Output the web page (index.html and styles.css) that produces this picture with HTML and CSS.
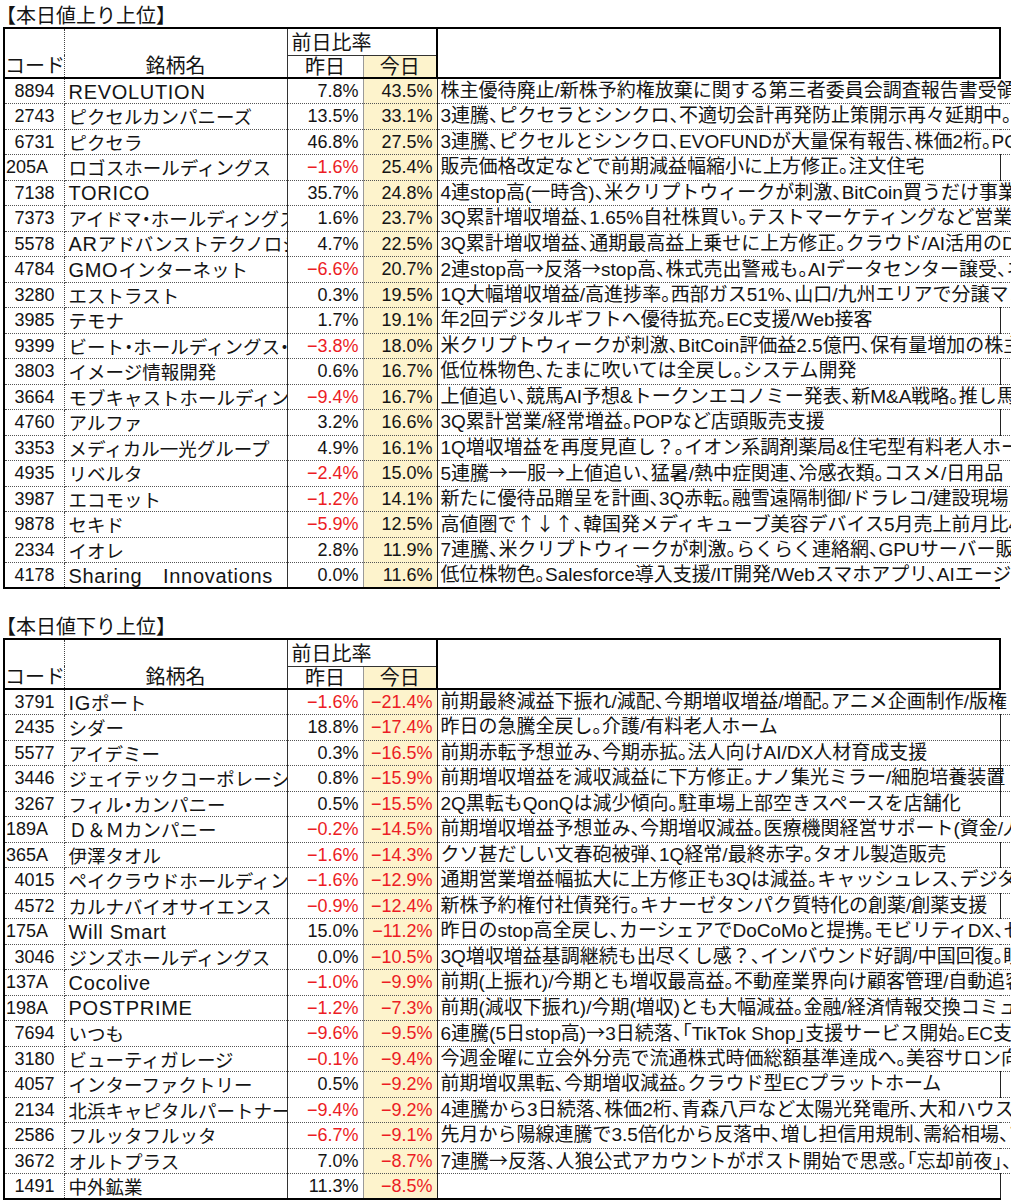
FILE: index.html
```html
<!DOCTYPE html>
<html lang="ja">
<head>
<meta charset="utf-8">
<title>本日値上り上位 / 本日値下り上位</title>
<link rel="stylesheet" href="styles.css">
</head>
<body>
<section class="block">
  <h2 class="title">【本日値上り上位】</h2>
  <table class="rank">
    <colgroup><col class="c-code"><col class="c-name"><col class="c-prev"><col class="c-today"><col class="c-note"><col class="c-extra"></colgroup>
    <thead>
      <tr class="h1"><th rowspan="2" class="h-code">コード</th><th rowspan="2" class="h-name">銘柄名</th><th colspan="2" class="h-ratio">前日比率</th><th rowspan="2" class="h-note"></th><th rowspan="2" class="h-extra"></th></tr>
      <tr class="h2"><th class="h-prev">昨日</th><th class="h-today">今日</th></tr>
    </thead>
    <tbody>
      <tr><td class="code num">8894</td><td class="name"><span class="lat">REVOLUTION</span></td><td class="prev">7.8%</td><td class="today">43.5%</td><td class="note">株主優待廃止/新株予約権放棄に関する第三者委員会調査報告書受領</td><td class="extra"></td></tr>
      <tr><td class="code num">2743</td><td class="name">ピクセルカンパニーズ</td><td class="prev">13.5%</td><td class="today">33.1%</td><td class="note">3連騰、ピクセラとシンクロ、不適切会計再発防止策開示再々延期中。福祉</td><td class="extra"></td></tr>
      <tr><td class="code num">6731</td><td class="name">ピクセラ</td><td class="prev">46.8%</td><td class="today">27.5%</td><td class="note">3連騰、ピクセルとシンクロ、EVOFUNDが大量保有報告、株価2桁。PC用</td><td class="extra"></td></tr>
      <tr><td class="code">205A</td><td class="name">ロゴスホールディングス</td><td class="prev neg">−1.6%</td><td class="today">25.4%</td><td class="note short">販売価格改定などで前期減益幅縮小に上方修正。注文住宅</td><td class="extra"></td></tr>
      <tr><td class="code num">7138</td><td class="name"><span class="lat">TORICO</span></td><td class="prev">35.7%</td><td class="today">24.8%</td><td class="note">4連stop高(一時含)、米クリプトウィークが刺激、BitCoin買うだけ事業に参入</td><td class="extra"></td></tr>
      <tr><td class="code num">7373</td><td class="name">アイドマ・ホールディングス</td><td class="prev">1.6%</td><td class="today">23.7%</td><td class="note">3Q累計増収増益、1.65%自社株買い。テストマーケティングなど営業支援</td><td class="extra"></td></tr>
      <tr><td class="code num">5578</td><td class="name"><span class="lat">AR</span>アドバンストテクノロジ</td><td class="prev">4.7%</td><td class="today">22.5%</td><td class="note">3Q累計増収増益、通期最高益上乗せに上方修正。クラウド/AI活用のDX</td><td class="extra"></td></tr>
      <tr><td class="code num">4784</td><td class="name"><span class="lat">GMO</span>インターネット</td><td class="prev neg">−6.6%</td><td class="today">20.7%</td><td class="note">2連stop高<span class="sym">→</span>反落<span class="sym">→</span>stop高、株式売出警戒も。AIデータセンター譲受、ネット</td><td class="extra"></td></tr>
      <tr><td class="code num">3280</td><td class="name">エストラスト</td><td class="prev">0.3%</td><td class="today">19.5%</td><td class="note">1Q大幅増収増益/高進捗率。西部ガス51%、山口/九州エリアで分譲マンション</td><td class="extra"></td></tr>
      <tr><td class="code num">3985</td><td class="name">テモナ</td><td class="prev">1.7%</td><td class="today">19.1%</td><td class="note short">年2回デジタルギフトへ優待拡充。EC支援/Web接客</td><td class="extra"></td></tr>
      <tr><td class="code num">9399</td><td class="name">ビート・ホールディングス・リミテッド</td><td class="prev neg">−3.8%</td><td class="today">18.0%</td><td class="note">米クリプトウィークが刺激、BitCoin評価益2.5億円、保有量増加の株主提案</td><td class="extra"></td></tr>
      <tr><td class="code num">3803</td><td class="name">イメージ情報開発</td><td class="prev">0.6%</td><td class="today">16.7%</td><td class="note short">低位株物色、たまに吹いては全戻し。システム開発</td><td class="extra"></td></tr>
      <tr><td class="code num">3664</td><td class="name">モブキャストホールディングス</td><td class="prev neg">−9.4%</td><td class="today">16.7%</td><td class="note">上値追い、競馬AI予想&amp;トークンエコノミー発表、新M&amp;A戦略。推し馬ゲーム</td><td class="extra"></td></tr>
      <tr><td class="code num">4760</td><td class="name">アルファ</td><td class="prev">3.2%</td><td class="today">16.6%</td><td class="note short">3Q累計営業/経常増益。POPなど店頭販売支援</td><td class="extra"></td></tr>
      <tr><td class="code num">3353</td><td class="name">メディカル一光グループ</td><td class="prev">4.9%</td><td class="today">16.1%</td><td class="note">1Q増収増益を再度見直し？。イオン系調剤薬局&amp;住宅型有料老人ホーム</td><td class="extra"></td></tr>
      <tr><td class="code num">4935</td><td class="name">リベルタ</td><td class="prev neg">−2.4%</td><td class="today">15.0%</td><td class="note">5連騰<span class="sym">→</span>一服<span class="sym">→</span>上値追い、猛暑/熱中症関連、冷感衣類。コスメ/日用品</td><td class="extra"></td></tr>
      <tr><td class="code num">3987</td><td class="name">エコモット</td><td class="prev neg">−1.2%</td><td class="today">14.1%</td><td class="note">新たに優待品贈呈を計画、3Q赤転。融雪遠隔制御/ドラレコ/建設現場</td><td class="extra"></td></tr>
      <tr><td class="code num">9878</td><td class="name">セキド</td><td class="prev neg">−5.9%</td><td class="today">12.5%</td><td class="note">高値圏で<span class="sym">↑↓↑</span>、韓国発メディキューブ美容デバイス5月売上前月比4倍</td><td class="extra"></td></tr>
      <tr><td class="code num">2334</td><td class="name">イオレ</td><td class="prev">2.8%</td><td class="today">11.9%</td><td class="note">7連騰、米クリプトウィークが刺激。らくらく連絡網、GPUサーバー販売、暗号資産</td><td class="extra"></td></tr>
      <tr class="last"><td class="code num">4178</td><td class="name"><span class="lat">Sharing　Innovations</span></td><td class="prev">0.0%</td><td class="today">11.6%</td><td class="note">低位株物色。Salesforce導入支援/IT開発/Webスマホアプリ、AIエージェント</td><td class="extra"></td></tr>
    </tbody>
  </table>
</section>

<section class="block block-down">
  <h2 class="title">【本日値下り上位】</h2>
  <table class="rank">
    <colgroup><col class="c-code"><col class="c-name"><col class="c-prev"><col class="c-today"><col class="c-note"><col class="c-extra"></colgroup>
    <thead>
      <tr class="h1"><th rowspan="2" class="h-code">コード</th><th rowspan="2" class="h-name">銘柄名</th><th colspan="2" class="h-ratio">前日比率</th><th rowspan="2" class="h-note"></th><th rowspan="2" class="h-extra"></th></tr>
      <tr class="h2"><th class="h-prev">昨日</th><th class="h-today">今日</th></tr>
    </thead>
    <tbody>
      <tr><td class="code num">3791</td><td class="name"><span class="lat">IG</span>ポート</td><td class="prev neg">−1.6%</td><td class="today neg">−21.4%</td><td class="note">前期最終減益下振れ/減配、今期増収増益/増配。アニメ企画制作/版権</td><td class="extra"></td></tr>
      <tr><td class="code num">2435</td><td class="name">シダー</td><td class="prev">18.8%</td><td class="today neg">−17.4%</td><td class="note short">昨日の急騰全戻し。介護/有料老人ホーム</td><td class="extra"></td></tr>
      <tr><td class="code num">5577</td><td class="name">アイデミー</td><td class="prev">0.3%</td><td class="today neg">−16.5%</td><td class="note short">前期赤転予想並み、今期赤拡。法人向けAI/DX人材育成支援</td><td class="extra"></td></tr>
      <tr><td class="code num">3446</td><td class="name">ジェイテックコーポレーション</td><td class="prev">0.8%</td><td class="today neg">−15.9%</td><td class="note short">前期増収増益を減収減益に下方修正。ナノ集光ミラー/細胞培養装置</td><td class="extra"></td></tr>
      <tr><td class="code num">3267</td><td class="name">フィル・カンパニー</td><td class="prev">0.5%</td><td class="today neg">−15.5%</td><td class="note short">2Q黒転もQonQは減少傾向。駐車場上部空きスペースを店舗化</td><td class="extra"></td></tr>
      <tr><td class="code">189A</td><td class="name">Ｄ＆Ｍカンパニー</td><td class="prev neg">−0.2%</td><td class="today neg">−14.5%</td><td class="note">前期増収増益予想並み、今期増収減益。医療機関経営サポート(資金/人材)</td><td class="extra"></td></tr>
      <tr><td class="code">365A</td><td class="name">伊澤タオル</td><td class="prev neg">−1.6%</td><td class="today neg">−14.3%</td><td class="note short">クソ甚だしい文春砲被弾、1Q経常/最終赤字。タオル製造販売</td><td class="extra"></td></tr>
      <tr><td class="code num">4015</td><td class="name">ペイクラウドホールディングス</td><td class="prev neg">−1.6%</td><td class="today neg">−12.9%</td><td class="note">通期営業増益幅拡大に上方修正も3Qは減益。キャッシュレス、デジタル化</td><td class="extra"></td></tr>
      <tr><td class="code num">4572</td><td class="name">カルナバイオサイエンス</td><td class="prev neg">−0.9%</td><td class="today neg">−12.4%</td><td class="note short">新株予約権付社債発行。キナーゼタンパク質特化の創薬/創薬支援</td><td class="extra"></td></tr>
      <tr><td class="code">175A</td><td class="name"><span class="lat">Will Smart</span></td><td class="prev">15.0%</td><td class="today neg">−11.2%</td><td class="note">昨日のstop高全戻し、カーシェアでDoCoMoと提携。モビリティDX、ゼンリン</td><td class="extra"></td></tr>
      <tr><td class="code num">3046</td><td class="name">ジンズホールディングス</td><td class="prev">0.0%</td><td class="today neg">−10.5%</td><td class="note">3Q増収増益基調継続も出尽くし感？、インバウンド好調/中国回復。眼鏡</td><td class="extra"></td></tr>
      <tr><td class="code">137A</td><td class="name"><span class="lat">Cocolive</span></td><td class="prev neg">−1.0%</td><td class="today neg">−9.9%</td><td class="note">前期(上振れ)/今期とも増収最高益。不動産業界向け顧客管理/自動追客</td><td class="extra"></td></tr>
      <tr><td class="code">198A</td><td class="name"><span class="lat">POSTPRIME</span></td><td class="prev neg">−1.2%</td><td class="today neg">−7.3%</td><td class="note">前期(減収下振れ)/今期(増収)とも大幅減益。金融/経済情報交換コミュニティ</td><td class="extra"></td></tr>
      <tr><td class="code num">7694</td><td class="name">いつも</td><td class="prev neg">−9.6%</td><td class="today neg">−9.5%</td><td class="note">6連騰(5日stop高)<span class="sym">→</span>3日続落、「TikTok Shop」支援サービス開始。EC支援</td><td class="extra"></td></tr>
      <tr><td class="code num">3180</td><td class="name">ビューティガレージ</td><td class="prev neg">−0.1%</td><td class="today neg">−9.4%</td><td class="note">今週金曜に立会外分売で流通株式時価総額基準達成へ。美容サロン向け</td><td class="extra"></td></tr>
      <tr><td class="code num">4057</td><td class="name">インターファクトリー</td><td class="prev">0.5%</td><td class="today neg">−9.2%</td><td class="note short">前期増収黒転、今期増収減益。クラウド型ECプラットホーム</td><td class="extra"></td></tr>
      <tr><td class="code num">2134</td><td class="name">北浜キャピタルパートナーズ</td><td class="prev neg">−9.4%</td><td class="today neg">−9.2%</td><td class="note">4連騰から3日続落、株価2桁、青森八戸など太陽光発電所、大和ハウス</td><td class="extra"></td></tr>
      <tr><td class="code num">2586</td><td class="name">フルッタフルッタ</td><td class="prev neg">−6.7%</td><td class="today neg">−9.1%</td><td class="note">先月から陽線連騰で3.5倍化から反落中、増し担信用規制、需給相場、ア</td><td class="extra"></td></tr>
      <tr><td class="code num">3672</td><td class="name">オルトプラス</td><td class="prev">7.0%</td><td class="today neg">−8.7%</td><td class="note">7連騰<span class="sym">→</span>反落、人狼公式アカウントがポスト開始で思惑。「忘却前夜」、「</td><td class="extra"></td></tr>
      <tr class="last"><td class="code num">1491</td><td class="name">中外鉱業</td><td class="prev">11.3%</td><td class="today neg">−8.5%</td><td class="note short"></td><td class="extra"></td></tr>
    </tbody>
  </table>
</section>
</body>
</html>
```

FILE: styles.css
```css
html, body {
  margin: 0;
  padding: 0;
  overflow: hidden;
  background: #fff;
}

body {
  padding-left: 3px;
  color: #141414;
  font-family: "Liberation Sans", "Noto Sans CJK JP", sans-serif;
}

.title {
  box-sizing: border-box;
  height: 27px;
  margin: 0 0 0 -7px;
  padding-top: 4px;
  font: 400 20px/22px "Noto Sans CJK JP", sans-serif;
}

.block-down {
  margin-top: 22px;
}

.rank {
  border-collapse: collapse;
  table-layout: fixed;
  width: 1036px;
}

.c-code { width: 60px; }
.c-name { width: 223px; }
.c-prev { width: 76px; }
.c-today { width: 74px; }
.c-note { width: 563px; }
.c-extra { width: 40px; }

/* header */
.rank th {
  padding: 0;
  font: 400 20px/20px "Noto Sans CJK JP", sans-serif;
  white-space: nowrap;
}

.rank .h1 { height: 27px; }
.rank .h2 { height: 23px; }

.h-code {
  border-left: 2px solid #000;
  border-top: 2px solid #000;
  border-bottom: 2px solid #000;
  border-right: 1px dotted #444;
  text-align: left;
  vertical-align: bottom;
}

.rank th.h-code,
.rank th.h-name {
  padding-bottom: 2px;
}

.h-name {
  border-top: 2px solid #000;
  border-bottom: 2px solid #000;
  border-right: 1px solid #333;
  text-align: center;
  vertical-align: bottom;
}

.rank .h-ratio {
  border-top: 2px solid #000;
  border-bottom: 1px solid #333;
  text-align: left;
  vertical-align: middle;
  padding-left: 4px;
}

.h-prev {
  border-bottom: 2px solid #000;
  border-right: 1px solid #999;
  text-align: center;
}

.h-today {
  border-bottom: 2px solid #000;
  background: #fdf3cc;
  text-align: center;
}

.h-note {
  border: 2px solid #000;
}

.h-extra {
  border: none;
}

/* body rows */
.rank tbody tr {
  height: 25.5px;
}

.rank td {
  padding: 0;
  border-bottom: 1px dotted #555;
  white-space: nowrap;
  line-height: 20px;
  font-size: 18.5px;
  vertical-align: middle;
}

.rank td.code {
  border-left: 2px solid #000;
  border-right: 1px dotted #444;
  padding-left: 1px;
  font-size: 18px;
}

.rank td.code.num {
  text-align: right;
  padding-right: 9px;
  padding-left: 0;
}

.rank td.name {
  overflow: hidden;
  border-right: 1px solid #333;
  padding-left: 4px;
  font-family: "Noto Sans CJK JP", sans-serif;
  font-feature-settings: "halt";
}

.lat {
  font-family: "Liberation Sans", "Noto Sans CJK JP", sans-serif;
  font-size: 20px;
  letter-spacing: 0.7px;
}

.sym {
  font-family: "Noto Sans CJK JP", sans-serif;
  font-feature-settings: normal;
}

.rank td.prev,
.rank td.today {
  text-align: right;
  padding-right: 4px;
  font-size: 18px;
}

.rank td.prev {
  border-right: 1px solid #999;
}

.rank td.today {
  border-right: 1px solid #222;
  background: #fdf3cc;
}

.neg {
  color: #ec1c24;
}

.rank td.note {
  padding-left: 3px;
  overflow: visible;
  font-size: 19px;
  font-feature-settings: "halt";
}

.rank td.note.short {
  border-right: 1px solid #222;
}

.rank td.extra {
  border-left: none;
}

.rank tr.last td {
  border-bottom: 2px solid #000;
}

.rank tr.last td.extra {
  border-bottom: none;
}
```
